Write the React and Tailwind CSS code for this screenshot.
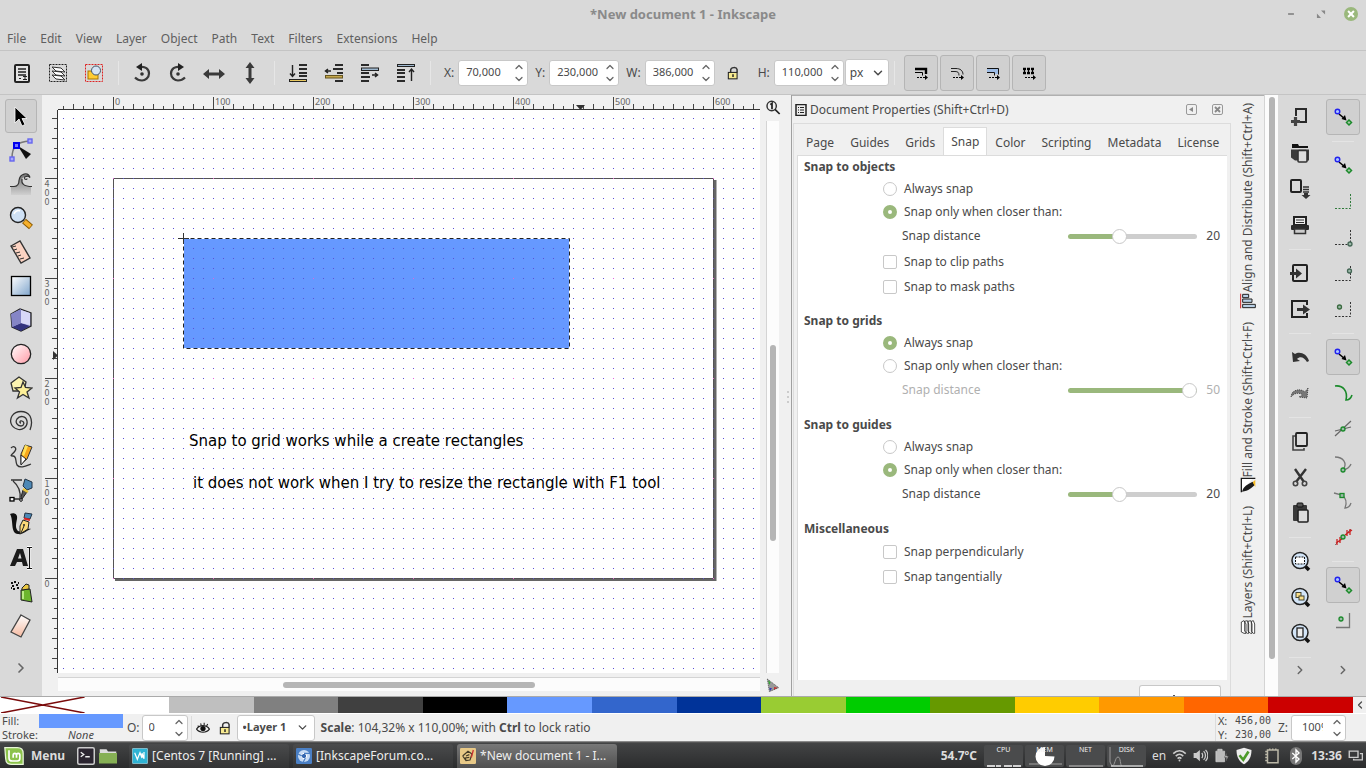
import { ChevronDown, ChevronLeft, ChevronRight, ChevronUp } from "lucide-react";

const menus = ["File", "Edit", "View", "Layer", "Object", "Path", "Text", "Filters", "Extensions", "Help"];

const swatches = [
  "#ffffff", "#bfbfbf", "#808080", "#404040", "#000000", "#6699ff", "#3366cc", "#003399",
  "#99cc33", "#00cc00", "#669900", "#ffcc00", "#ff9900", "#ff6600", "#cc0000",
];

const tabs = ["Page", "Guides", "Grids", "Snap", "Color", "Scripting", "Metadata", "License"];

function Svg({ size = 24, children, className = "" }) {
  return (
    <svg width={size} height={size} viewBox="0 0 24 24" fill="none" className={`shrink-0 ${className}`} aria-hidden="true">
      {children}
    </svg>
  );
}

/* ---------- selector toolbar icons ---------- */

const selectIcons = {
  "Select all": (
    <>
      <rect x="5" y="4" width="14" height="17" rx="1" fill="#e4e4e4" stroke="#222" strokeWidth="2" />
      <path d="M8 8h8M8 11h8M8 14h8" stroke="#222" strokeWidth="1.4" />
      <path d="M9 17.500h2M13 15.500h4M13 18.500h4M15 15.500v3" stroke="#222" />
    </>
  ),
  "Select all in all layers": (
    <>
      <rect x="3.5" y="3.5" width="17" height="17" stroke="#222" strokeDasharray="2 1" />
      <path d="M6 14l9 1 4 4-9-1zM6 10l9 1 4 4-9-1zM6 6l9 1 4 4-9-1z" fill="#fff" stroke="#333" />
    </>
  ),
  Deselect: (
    <>
      <rect x="3.5" y="3.5" width="17" height="17" stroke="#d22" strokeDasharray="2 1" />
      <rect x="6" y="10" width="10" height="8" fill="#fc3" stroke="#a70" />
      <circle cx="14" cy="9.5" r="4.5" fill="#d5e4f5" stroke="#456" />
    </>
  ),
};

const rotateIcons = {
  "Rotate left": (
    <>
      <path d="M10 6c5-1 9 2 9 6.500s-4 7-7 7c-3 0-5-1-7-3" stroke="#3a3a3a" strokeWidth="2.2" />
      <path d="M12 2v8L6 6z" fill="#222" />
      <circle cx="12" cy="13" r="1.8" fill="#333" />
    </>
  ),
  "Rotate right": (
    <>
      <path d="M14 6c-5-1-9 2-9 6.500s4 7 7 7c3 0 5-1 7-3" stroke="#3a3a3a" strokeWidth="2.2" />
      <path d="M12 2v8l6-4z" fill="#222" />
      <circle cx="12" cy="13" r="1.8" fill="#333" />
    </>
  ),
  "Flip horizontal": <path d="M1 13l6-5v3.500h10V8l6 5-6 5v-3.500H7V18z" fill="#3a3a3a" />,
  "Flip vertical": <path d="M12 1l4.500 6H13.500v10h3L12 23l-4.500-6h3V7h-3z" fill="#3a3a3a" />,
};

const raiseIcons = {
  "Lower to bottom": (
    <>
      <path d="M13 4h8M13 8h8M13 12h8M13 15h8" stroke="#2a2a2a" strokeWidth="2" />
      <path d="M6.500 4v11M4 12.500l2.500 3 2.500-3" stroke="#222" strokeWidth="1.400" />
      <rect x="3.500" y="18.500" width="17" height="2" fill="#e8c860" stroke="#222" />
    </>
  ),
  Lower: (
    <>
      <path d="M13 4h8M11 8h10M15 12h6M13 20h8" stroke="#2a2a2a" strokeWidth="2" />
      <rect x="3.500" y="14.500" width="17" height="2.500" fill="#c5a94f" stroke="#665520" />
      <path d="M9 10H4M6 8l-2.500 2L6 12" stroke="#222" strokeWidth="1.500" />
    </>
  ),
  Raise: (
    <>
      <path d="M3 4h8M3 12h8M3 16h9M3 20h8" stroke="#2a2a2a" strokeWidth="2" />
      <rect x="3.500" y="7" width="17" height="2.500" fill="#9fb9d0" stroke="#222" />
      <path d="M14 14h5M17 12l2.500 2-2.500 2" stroke="#222" strokeWidth="1.500" />
    </>
  ),
  "Raise to top": (
    <>
      <rect x="3.500" y="3.500" width="17" height="2" fill="#9fb9d0" stroke="#222" />
      <path d="M3 9h8M3 12h8M3 16h8M3 20h8" stroke="#2a2a2a" strokeWidth="2" />
      <path d="M17.500 20V8M15 11l2.500-3 2.500 3" stroke="#222" strokeWidth="1.400" />
    </>
  ),
};

const dashArrow = (
  <>
    <path d="M8 16.500h2M11 16.500h2M14 16.500h3" stroke="#000" />
    <path d="M16 14l3 2.500-3 2.500z" fill="#000" />
  </>
);

const affectIcons = {
  "Scale stroke width": (
    <>
      <path d="M6 8h11v5" stroke="#000" strokeWidth="2.400" />
      <path d="M6 11.500h7.500v3" stroke="#000" />
      {dashArrow}
    </>
  ),
  "Scale rounded corners": (
    <>
      <path d="M6 7.500h5c4 0 7 2 7 6M6 10.500h4c3 0 4 1 4 4" stroke="#222" />
      {dashArrow}
    </>
  ),
  "Move gradients": (
    <>
      <path d="M6 7h12v6h-4v-2H6z" fill="#9dbce6" />
      <path d="M6 7.500h11.500v6M6 11.500h7.500v3" stroke="#111" />
      {dashArrow}
    </>
  ),
  "Move patterns": (
    <>
      <path d="M6 8h12M6 12h12" stroke="#000" strokeWidth="2.400" strokeDasharray="3 1" />
      <path d="M7.500 7v6M11.500 7v6M15.500 7v6" stroke="#000" />
      {dashArrow}
    </>
  ),
};

/* ---------- toolbox icons ---------- */

const tools = {
  Selector: <path d="M6 3v16l4-4 3 7 3-1.500-3-6h5z" fill="#000" stroke="#fff" strokeWidth=".8" />,
  "Node editor": (
    <>
      <path d="M3 20C3 9 7 4 21 3" stroke="#777" strokeWidth="1.500" />
      <path d="M9 8l13 8-5 5z" fill="#111" />
      <rect x="5" y="5" width="5" height="5" fill="#77f" stroke="#00e" strokeWidth="2" />
      <rect x="19" y="1" width="4" height="4" fill="#aaf" stroke="#66e" strokeWidth="1.400" />
      <rect x="1" y="19" width="4" height="4" fill="#aaf" stroke="#66e" strokeWidth="1.400" />
    </>
  ),
  Tweak: (
    <>
      <path d="M2 15h3c4 0 5-3 5-6 1-7 9-9 11-3-1-1-2-2-4-1-4 0-5 3-4 6s4 4 9 4v8H2z" fill="url(#tweakFill)" />
      <path d="M1 14.500h4c4 0 5-3 5-6 1-7 9-9 11-3-1-1-2-2-4-1-2 0-2 3 0 3 1 0 1-1 1-1M13 7c-1 5 2 7.500 10 7.500" stroke="#333" strokeWidth="1.200" />
    </>
  ),
  Zoom: (
    <>
      <path d="M15 15l7 6" stroke="#8a5a00" strokeWidth="6" />
      <path d="M15.500 15.500l6 5" stroke="#f7b02c" strokeWidth="4" />
      <circle cx="9" cy="9" r="7.500" fill="#cfe1f5" stroke="#222" strokeWidth="1.400" />
      <path d="M5 8c1-3 4-4 6-3" stroke="#fff" strokeWidth="1.500" />
    </>
  ),
  Measure: (
    <>
      <path d="M2 6l9-5 10 17-9 5z" fill="#fbd3c2" stroke="#333" strokeWidth="1.400" />
      <path d="M3 7l4-1M5 10l3-1M7 13l4-1M9 16l3-1M11 19l4-1" stroke="#333" />
    </>
  ),
  Rectangle: <rect x="2.500" y="2.500" width="19" height="19" fill="url(#rectFill)" stroke="#000" strokeWidth="1.300" />,
  "3D box": (
    <>
      <path d="M2 6l9-5 11 4v13l-10 5-9-4z" fill="#b5b5e5" stroke="#222" strokeWidth="1.300" />
      <path d="M12 15l9 3-9 5-9-4z" fill="#33337f" />
      <path d="M12 1v14l-9 4-1-13z" fill="#8585c6" />
      <path d="M12 2l9 3v12l-9-2z" fill="#d8d8f8" />
    </>
  ),
  Ellipse: <circle cx="12" cy="12" r="9.700" fill="url(#circleFill)" stroke="#222" strokeWidth="1.300" />,
  Star: (
    <>
      <path d="M2 7l8-6 7 5-2 9H4z" fill="#fbf3b0" stroke="#333" strokeWidth="1.300" />
      <path d="M14 6l2.500 5.500 6.500.5-5 4 2 6-6-3.500L8.500 22l2-6L6 12l6-.5z" fill="#fdf098" stroke="#333" strokeWidth="1.300" />
    </>
  ),
  Spiral: (
    <path
      d="M12 13c-2 0-1-3 1-2 3 1 2 5-1 5-4 0-6-4-4-7 3-4 9-3 10 2 1 6-5 10-10 8C2 17 0 11 3 6 7 0 17 0 21 6c2 4 2 9 0 14"
      stroke="#333"
      strokeWidth="1.300"
    />
  ),
  Pencil: (
    <>
      <path d="M2 4c3-3 6 0 4 3-3 4-6 5-2 5 4 0 2 5 4 9 3 4 9 1 14-1" stroke="#333" strokeWidth="1.300" />
      <path d="M16 1l7 2-5 12-6 5 0-10z" fill="#f8a71c" stroke="#333" />
      <path d="M16 1l3 1-4 10-2-1z" fill="#ffe25a" />
      <path d="M12 11l5 4-5 6z" fill="#fff" stroke="#222" />
    </>
  ),
  Bezier: (
    <>
      <path d="M2 2h11M4 3c6 5 8 10 7 18H3" stroke="#333" strokeWidth="1.300" />
      <path d="M16 1l7 3v6l-5 2-4-4z" fill="#4d88b5" stroke="#234" />
      <path d="M14 12l4 2-5 7-1-2z" fill="#555" stroke="#222" />
      <path d="M14 11l5 3" stroke="#e8c640" strokeWidth="2.500" />
      <rect x="1" y="19.500" width="4" height="3.500" fill="#fff" stroke="#000" strokeWidth="1.300" />
      <circle cx="12" cy="22" r="1.300" fill="#fff" stroke="#000" />
    </>
  ),
  Calligraphy: (
    <>
      <path d="M1 2c4-2 8 0 7 5s-2 9 1 12c3 2 8-3 13-2-4 1-8 6-13 5C1 21 5 9 1 2z" fill="#111" />
      <path d="M16 1l7 1-2 5-6-1z" fill="#4d88b5" stroke="#234" />
      <path d="M15 6.500l6 1.500" stroke="#d22" strokeWidth="2" />
      <path d="M14 8l6 2-1 7-8 5 0-8z" fill="#fbd877" stroke="#222" />
      <path d="M12 21l3-7" stroke="#222" />
      <circle cx="15" cy="13" r="1" fill="#222" />
    </>
  ),
  Text: (
    <>
      <path d="M1 20L8 3h6l5 17h-5l-1-4H8l-2 4zM9 12.500h3.500L11 7z" fill="#1b1b1b" fillRule="evenodd" />
      <path d="M18 1.500h5M18 22.500h5M20.500 2v20" stroke="#fff" strokeWidth="3" />
      <path d="M18 1.500h5M18 22.500h5M20.500 2v20" stroke="#111" strokeWidth="1.200" />
    </>
  ),
  Spray: (
    <>
      <path d="M2 3h2M5 2h2M3 6h2M7 5h2M8 8h2M4 9h2M9 3h1M2 8h1" stroke="#111" strokeWidth="1.800" />
      <path d="M12 10l9-1 2 13-11-2z" fill="#6cb52d" stroke="#222" />
      <path d="M14 11v8" stroke="#b9ea84" strokeWidth="2" />
      <path d="M13 8l4-4 3 1v4l-7 1z" fill="#e8c640" stroke="#222" />
    </>
  ),
  Eraser: <path d="M12 1l9 5-9 17-10-5z" fill="url(#eraserFill)" stroke="#444" strokeWidth="1.300" />,
};

/* ---------- command bar icons ---------- */

const magnifier = (
  <>
    <path d="M17 17l4 4" stroke="#111" strokeWidth="3.500" />
    <circle cx="12" cy="11.500" r="8" fill="#d3e5f8" stroke="#222" strokeWidth="1.500" />
  </>
);

const commandGroups = [
  {
    New: (
      <>
        <path d="M8 11V4h10v13h-6" stroke="#2a2a2a" strokeWidth="2" />
        <path d="M3 16.500h9M7.500 12v9" stroke="#444" strokeWidth="3.200" />
      </>
    ),
    Open: (
      <>
        <path d="M4 3h6l1 2h9v2H4z" fill="#111" />
        <path d="M3 8.500h18v11H7l-4-3z" fill="#3a3a3a" />
        <rect x="10" y="9.500" width="9" height="11.500" rx="1" fill="#ddd" stroke="#333" strokeWidth="1.600" />
      </>
    ),
    Save: (
      <>
        <rect x="3" y="3" width="10" height="12" rx="1" stroke="#222" strokeWidth="2" />
        <path d="M15 10h6M15 12.500h6M15 15h6" stroke="#333" strokeWidth="1.300" />
        <path d="M16 16h4v2h2.500L18 22l-4.500-4H16z" fill="#333" />
      </>
    ),
    Print: (
      <>
        <rect x="6" y="4" width="12" height="8" fill="#eee" stroke="#222" strokeWidth="2" />
        <path d="M8 7h8M8 9.500h8" stroke="#333" />
        <rect x="3" y="12" width="18" height="5" rx="1" fill="#2a2a2a" />
        <rect x="6.500" y="16" width="11" height="4.500" fill="#ccc" stroke="#333" strokeWidth="1.500" />
      </>
    ),
  },
  {
    Import: (
      <>
        <rect x="5" y="4" width="14" height="16" rx="1" stroke="#222" strokeWidth="2" />
        <path d="M2 11h6V7.500l6 5-6 5V14H2z" fill="#333" />
      </>
    ),
    Export: (
      <>
        <path d="M19 8V4H4v16h15v-4" stroke="#222" strokeWidth="2" />
        <path d="M9 11h6V7.500l7 5-7 5V14H9z" fill="#333" />
      </>
    ),
  },
  {
    Undo: <path d="M4 7l1 10 7-1-3-2c3-3 7-2 10 3l2-1C19 8 11 6 7 9z" fill="#333" />,
    Redo: <path d="M20 7l-1 10-8-1 4-2c-4-3-9-2-12 2l1-4c4-4 9-4 13-1z" fill="#777" stroke="#444" strokeDasharray="1 1" />,
  },
  {
    Copy: (
      <>
        <path d="M8 7H5v14h11v-2" stroke="#444" strokeWidth="1.600" />
        <rect x="8" y="4" width="11" height="13" rx="1" fill="#ddd" stroke="#222" strokeWidth="1.800" />
      </>
    ),
    Cut: (
      <>
        <path d="M7 4l9 13M18 4L8 17" stroke="#333" strokeWidth="2.400" />
        <circle cx="7.500" cy="18.500" r="2.200" stroke="#444" strokeWidth="1.600" />
        <circle cx="16.500" cy="18.500" r="2.200" stroke="#444" strokeWidth="1.600" />
      </>
    ),
    Paste: (
      <>
        <rect x="5" y="4" width="14" height="16" rx="1" fill="#3a3a3a" />
        <rect x="9" y="2" width="6" height="4" rx="1" fill="#555" stroke="#111" />
        <rect x="10" y="9" width="10" height="12" rx="1" fill="#ddd" stroke="#222" strokeWidth="1.600" />
      </>
    ),
  },
  {
    "Zoom selection": (
      <>
        {magnifier}
        <rect x="7.500" y="8" width="9" height="7" fill="#fff" stroke="#111" strokeDasharray="2 1" />
      </>
    ),
    "Zoom drawing": (
      <>
        {magnifier}
        <rect x="8" y="7.500" width="5" height="5" fill="#fbe08a" stroke="#443" />
        <rect x="11" y="11" width="5" height="4" fill="#fbe08a" stroke="#443" />
      </>
    ),
    "Zoom page": (
      <>
        {magnifier}
        <rect x="9" y="7" width="6" height="9" fill="#eee" stroke="#222" strokeWidth="1.300" />
      </>
    ),
  },
];

/* ---------- snap bar icons ---------- */

const snapArrow = (
  <>
    <path d="M8 9l6 5" stroke="#000" strokeWidth="1.600" />
    <path d="M15.500 15.500l-5-1.500 3.500-4z" fill="#000" />
    <circle cx="6.500" cy="6.500" r="2.300" fill="#aac4ff" stroke="#22e" strokeWidth="1.400" />
    <path d="M18 15l2.500 2.500-2.500 2.500-2.500-2.500z" fill="#a9c7a9" stroke="#1a8a2a" strokeWidth="1.500" />
  </>
);
const corner = <path d="M4 19.500h15.500V5" stroke="#333" strokeDasharray="2 1.500" />;
const smallNode = (cx, cy, color = "#1a8a2a") => (
  <circle cx={cx} cy={cy} r="2" fill="#9bb8a8" stroke={color} strokeWidth="1.300" />
);

const snapGroups = [
  [{ name: "Enable snapping", on: true, art: snapArrow }],
  [
    { name: "Snap bounding boxes", art: snapArrow },
    { name: "Snap to edges", art: <path d="M4 19.500h15.500V5" stroke="#2f7a3a" strokeDasharray="2 1.500" /> },
    { name: "Snap to corners", art: <>{corner}{smallNode(19, 19, "#465")}</> },
    { name: "Snap to edge midpoints", art: <>{corner}{smallNode(18.500, 10, "#465")}</> },
    { name: "Snap to box centers", art: <>{corner}{smallNode(8.500, 10, "#3a6a3f")}</> },
  ],
  [
    { name: "Snap nodes", on: true, art: snapArrow },
    { name: "Snap to paths", art: <path d="M4 5c8-1 13 5 11 14 3 0 5-2 6-5" stroke="#1a8a2a" strokeWidth="1.600" /> },
    { name: "Snap to intersections", art: <><path d="M4 19L20 4M4 14l16-4" stroke="#666" strokeWidth="1.200" />{smallNode(12, 12)}</> },
    { name: "Snap to cusp nodes", art: <><path d="M4 4c8 0 13 6 8 13 4-1 7-3 8-6" stroke="#777" strokeWidth="1.300" />{smallNode(12, 17)}</> },
    { name: "Snap to smooth nodes", art: <><path d="M3 4l8 2c4 3 5 8 3 13 3 0 5-2 6-5" stroke="#777" strokeWidth="1.300" /><rect x="9" y="4.500" width="4" height="4" fill="#9bb8a8" stroke="#1a8a2a" strokeWidth="1.300" /></> },
    { name: "Snap to line midpoints", art: <><path d="M4 20L20 4" stroke="#777" /><path d="M6 14v6M9 12v6M5 18l6-4M16 5v6M19 4v6M14 10l7-5" stroke="#c22" strokeWidth="1.300" />{smallNode(12, 12)}</> },
  ],
  [
    { name: "Snap others", on: true, art: snapArrow },
    { name: "Snap object centers", art: <><path d="M5 18.500h13.500V4" stroke="#777" strokeWidth="1.300" />{smallNode(10, 10)}</> },
  ],
];

function Gradients() {
  return (
    <svg width="0" height="0" className="absolute" aria-hidden="true">
      <defs>
        <linearGradient id="rectFill" x1="0" y1="0" x2="1" y2="1">
          <stop offset="0" stopColor="#fff" />
          <stop offset="1" stopColor="#7fa5cc" />
        </linearGradient>
        <linearGradient id="circleFill" x1="0" y1="0" x2="1" y2="1">
          <stop offset="0" stopColor="#fff" />
          <stop offset="1" stopColor="#ff9aa6" />
        </linearGradient>
        <linearGradient id="eraserFill" x1="0" y1="0" x2="0" y2="1">
          <stop offset="0" stopColor="#fff" />
          <stop offset="1" stopColor="#f5b9a0" />
        </linearGradient>
        <linearGradient id="tweakFill" x1="0" y1="0" x2="0" y2="1">
          <stop offset="0" stopColor="#777" />
          <stop offset="1" stopColor="#d0d0d0" />
        </linearGradient>
      </defs>
    </svg>
  );
}

function TitleBar() {
  return (
    <header className="grid h-7 grid-cols-[1fr_auto_1fr] items-center">
      <h1 className="col-start-2 pt-0.5 text-[13px] font-bold text-[#8a8a8a]">*New document 1 - Inkscape</h1>
      <div className="flex items-center justify-end gap-4 pr-2">
        <button type="button" aria-label="Minimize">
          <Svg size={14}><path d="M7 12h10" stroke="#888" strokeWidth="3" /></Svg>
        </button>
        <button type="button" aria-label="Maximize">
          <Svg size={14}><path d="M12 6h7v7zM5 11v8h7z" fill="#888" /></Svg>
        </button>
        <button type="button" aria-label="Close window">
          <Svg size={14}>
            <circle cx="12" cy="12" r="12" fill="#9ab87c" />
            <path d="M7 7l10 10M17 7L7 17" stroke="#fff" strokeWidth="3.500" />
          </Svg>
        </button>
      </div>
    </header>
  );
}

function ToolbarSeparator() {
  return (
    <span className="flex h-6 w-3 shrink-0 justify-center">
      <span className="w-px bg-[#e6e6e6]" />
    </span>
  );
}

function IconGroup({ icons }) {
  return Object.entries(icons).map(([name, art]) => (
    <button key={name} type="button" aria-label={name} className="flex h-9 w-9 shrink-0 items-center justify-center">
      <Svg>{art}</Svg>
    </button>
  ));
}

function Steppers() {
  return (
    <span className="flex flex-col text-[#666]">
      <ChevronUp size={12} strokeWidth={2.500} />
      <ChevronDown size={12} strokeWidth={2.500} />
    </span>
  );
}

function SpinField({ label, value }) {
  return (
    <label className="flex items-center gap-1">
      <span>{label}:</span>
      <span className="flex h-[26px] w-[70px] items-center rounded-[3px] border border-[#c8c8c8] bg-white pr-0.5 pl-[7px]">
        <input type="text" defaultValue={value} className="w-11 min-w-0 flex-1 bg-transparent text-[11px] outline-none" />
        <Steppers />
      </span>
    </label>
  );
}

function Padlock() {
  return (
    <Svg size={14}>
      <path d="M8 11V7c0-5 10-6 11-1v5" stroke="#333" strokeWidth="2.500" />
      <rect x="4" y="11" width="15" height="11" fill="#f7ea90" stroke="#222" strokeWidth="1.800" />
      <path d="M12 14v5" stroke="#222" strokeWidth="2.500" />
    </Svg>
  );
}

function SelectorToolbar() {
  return (
    <div className="flex h-[45px] items-center border-y border-[#c4c4c4] pl-1">
      <IconGroup icons={selectIcons} />
      <ToolbarSeparator />
      <IconGroup icons={rotateIcons} />
      <ToolbarSeparator />
      <IconGroup icons={raiseIcons} />
      <ToolbarSeparator />
      <div className="flex items-center gap-[7px] pl-2">
        <SpinField label="X" value="70,000" />
        <SpinField label="Y" value="230,000" />
        <SpinField label="W" value="386,000" />
        <button type="button" aria-label="Lock width and height" className="w-[29px] pl-1">
          <Padlock />
        </button>
        <SpinField label="H" value="110,000" />
      </div>
      <span className="relative ml-px flex items-center">
        <select aria-label="Units" defaultValue="px" className="h-[27px] w-11 appearance-none rounded-[3px] border border-[#c8c8c8] bg-white pl-1">
          <option>px</option>
          <option>mm</option>
        </select>
        <ChevronDown size={14} strokeWidth={2.500} className="pointer-events-none absolute right-1" />
      </span>
      <ToolbarSeparator />
      <div className="flex gap-0.5 pl-[3px]">
        {Object.entries(affectIcons).map(([name, art]) => (
          <button
            key={name}
            type="button"
            aria-label={name}
            aria-pressed="true"
            className="flex h-9 w-[34px] items-center justify-center rounded-[3px] border border-[#b5b5b5] bg-[#d0d0d0]"
          >
            <Svg>{art}</Svg>
          </button>
        ))}
      </div>
    </div>
  );
}

function Toolbox() {
  return (
    <nav aria-label="Tools" className="flex w-[42px] shrink-0 flex-col items-center pt-1">
      {Object.entries(tools).map(([name, art]) => (
        <button
          key={name}
          type="button"
          aria-label={name}
          className={`flex h-[34px] w-8 items-center justify-center rounded-[3px] border ${
            name === "Selector" ? "border-[#b5b5b5] bg-[#d0d0d0]" : "border-transparent"
          }`}
        >
          <Svg>{art}</Svg>
        </button>
      ))}
      <button type="button" aria-label="More tools" className="mt-[17px] text-[#666]">
        <ChevronRight size={16} strokeWidth={2.500} />
      </button>
    </nav>
  );
}

/* ---------- rulers and canvas ---------- */

const GRID = 10;
const ORIGIN_X = 55;
const TOP_Y = 68;

function tickLength(step) {
  if (step % 10 === 0) return 12;
  return step % 2 === 0 ? 5 : 3;
}

function HorizontalRuler() {
  const steps = Array.from({ length: 70 }, (_, i) => i - 5);
  return (
    <svg className="ml-4 block h-[15px] w-[702px] max-w-full" aria-hidden="true">
      {steps.map((s) => (
        <rect key={s} x={ORIGIN_X + s * GRID} y={14 - tickLength(s)} width="1" height={tickLength(s)} fill="#444" />
      ))}
      {[0, 100, 200, 300, 400, 500, 600].map((n) => (
        <text key={n} x={ORIGIN_X + n + 2} y="10" fontSize="9" fill="#666">{n}</text>
      ))}
      <path d="M518 10h9l-4.500 5z" fill="#333" />
      <rect x="0" y="14" width="100%" height="1" fill="#333" />
    </svg>
  );
}

function VerticalRuler() {
  const steps = Array.from({ length: 56 }, (_, i) => i - 6);
  return (
    <svg className="block w-4 shrink-0" aria-hidden="true">
      {steps.map((s) => (
        <rect key={s} x={15 - tickLength(s)} y={TOP_Y + s * GRID} width={tickLength(s)} height="1" fill="#444" />
      ))}
      {["400", "300", "200", "100", "0"].map((n, i) => (
        <text
          key={n}
          x="5"
          y={TOP_Y + i * 100 + 1}
          fontSize="9"
          fill="#666"
          className="font-['Noto_Sans_CJK_SC',sans-serif] [text-orientation:upright] [writing-mode:vertical-rl]"
        >
          {n}
        </text>
      ))}
      <path d="M11 241v9l5-4.500z" fill="#333" />
      <rect x="15" y="0" width="1" height="100%" fill="#333" />
    </svg>
  );
}

function Canvas() {
  return (
    <svg className="block h-auto min-w-0 flex-1 bg-white" role="img" aria-label="Drawing">
      <defs>
        <pattern id="minorGrid" width="10" height="10" x="5" y="8" patternUnits="userSpaceOnUse">
          <rect width="1" height="1" fill="#5a4fd8" />
        </pattern>
        <pattern id="majorGrid" width="100" height="100" x="55" y="68" patternUnits="userSpaceOnUse">
          <rect width="1" height="1" fill="#e060e0" />
        </pattern>
      </defs>
      <path d="M57 469.500h601M657 70v401" stroke="#666" strokeWidth="3" />
      <rect x="55.500" y="68.500" width="600" height="400" fill="#fff" stroke="#555" />
      <rect x="125" y="128" width="386" height="110" fill="#6699ff" />
      <rect width="100%" height="100%" fill="url(#minorGrid)" />
      <rect width="100%" height="100%" fill="url(#majorGrid)" />
      <rect x="125.500" y="128.500" width="386" height="110" stroke="#fff" fill="none" />
      <rect x="125.500" y="128.500" width="386" height="110" stroke="#222" strokeDasharray="4 3" fill="none" />
      <path d="M120 128.500h11M125.500 123v11" stroke="#333" />
      <text x="131" y="336" fontSize="15" fill="#000" className="font-['DejaVu_Sans',sans-serif]">Snap to grid works while a create rectangles</text>
      <text x="135" y="378" fontSize="15" fill="#000" className="font-['DejaVu_Sans',sans-serif]">it does not work when I try to resize the rectangle with F1 tool</text>
    </svg>
  );
}

function Workspace() {
  return (
    <section className="flex min-w-0 flex-1 bg-[#f0f0f0]">
      <div className="flex min-w-0 flex-1 flex-col">
        <HorizontalRuler />
        <div className="flex flex-1">
          <VerticalRuler />
          <Canvas />
        </div>
        <div className="mt-1 mb-[5px] ml-4 flex h-[14px] items-center border-t border-[#d4d4d4] bg-[#fcfcfc]">
          <span className="ml-[32%] h-1.5 w-[36%] rounded-full bg-[#b5b5b5]" />
        </div>
      </div>
      <div className="flex w-[31px] shrink-0 flex-col">
        <button type="button" aria-label="Zoom with window" className="flex h-[26px] items-center pl-[5px]">
          <Svg size={16}>
            <circle cx="10" cy="9" r="7" stroke="#333" strokeWidth="2.200" />
            <path d="M8 7l2.500-2v9M15 14l7 7" stroke="#222" strokeWidth="2.600" />
          </Svg>
        </button>
        <div className="flex flex-1 items-center">
          <span className="ml-1.5 flex w-[13px] flex-col items-center self-stretch border-l border-[#d4d4d4] bg-[#fcfcfc]">
            <span className="grow-[224]" />
            <span className="w-1.5 grow-[196] rounded-full bg-[#b5b5b5]" />
            <span className="grow-[132]" />
          </span>
          <span className="ml-2 flex flex-col gap-[3px]">
            <span className="size-0.5 bg-[#ccc]" />
            <span className="size-0.5 bg-[#ccc]" />
            <span className="size-0.5 bg-[#ccc]" />
          </span>
        </div>
        <button type="button" aria-label="Color managed view" className="flex h-[23px] items-center pl-1">
          <Svg size={16}>
            <path d="M5 3l17 13-14 6z" fill="#999" />
            <path d="M6 5l4 3-2 4z" fill="#3a3" />
            <path d="M15 15l6 1-6 3z" fill="#c33" />
            <path d="M8 16l4 1-3 4z" fill="#33b" />
            <path d="M5 3l17 13-14 6z" stroke="#444" strokeDasharray="2 1" />
          </Svg>
        </button>
      </div>
    </section>
  );
}

/* ---------- document properties dialog ---------- */

function RadioRow({ group, label, checked }) {
  return (
    <label className="ml-[85px] flex h-[23px] items-center gap-[7px]">
      <input
        type="radio"
        name={group}
        defaultChecked={checked}
        className="size-[14px] appearance-none rounded-full border border-[#c8c8c8] bg-white checked:border-[5px] checked:border-[#9ab87c]"
      />
      {label}
    </label>
  );
}

function CheckRow({ label }) {
  return (
    <label className="ml-[85px] flex h-[25px] items-center gap-[7px]">
      <input type="checkbox" className="size-[14px] appearance-none rounded-[2px] border border-[#c8c8c8] bg-white checked:bg-[#9ab87c]" />
      {label}
    </label>
  );
}

function DistanceRow({ id, value, disabled }) {
  const filled = ((value - 1) / 49) * 100;
  return (
    <div className={`ml-[104px] flex h-[26px] items-center pr-[7px] ${disabled ? "text-[#b0b0b0]" : ""}`}>
      <label htmlFor={id} className="flex-1">Snap distance</label>
      <input
        id={id}
        type="range"
        min="1"
        max="50"
        defaultValue={value}
        disabled={disabled}
        className="h-[5px] w-[129px] appearance-none rounded-full [&::-webkit-slider-thumb]:size-[15px] [&::-webkit-slider-thumb]:appearance-none [&::-webkit-slider-thumb]:rounded-full [&::-webkit-slider-thumb]:border [&::-webkit-slider-thumb]:border-[#c8c8c8] [&::-webkit-slider-thumb]:bg-white"
        style={{ background: `linear-gradient(to right, #9ab87c ${filled}%, #cecece ${filled}%)` }}
      />
      <output htmlFor={id} className="w-[23px] text-right">{value}</output>
    </div>
  );
}

function SnapSection({ title, children }) {
  return (
    <fieldset>
      <legend className="h-[21px] pl-1.5 leading-[22px] font-bold">{title}</legend>
      {children}
    </fieldset>
  );
}

function SnapPage() {
  return (
    <div className="flex flex-1 flex-col gap-[11px] border-t border-l border-[#dcdcdc] bg-white">
      <SnapSection title="Snap to objects">
        <RadioRow group="objects" label="Always snap" />
        <RadioRow group="objects" label="Snap only when closer than:" checked />
        <DistanceRow id="objects-distance" value={20} />
        <CheckRow label="Snap to clip paths" />
        <CheckRow label="Snap to mask paths" />
      </SnapSection>
      <SnapSection title="Snap to grids">
        <RadioRow group="grids" label="Always snap" checked />
        <RadioRow group="grids" label="Snap only when closer than:" />
        <DistanceRow id="grids-distance" value={50} disabled />
      </SnapSection>
      <SnapSection title="Snap to guides">
        <RadioRow group="guides" label="Always snap" />
        <RadioRow group="guides" label="Snap only when closer than:" checked />
        <DistanceRow id="guides-distance" value={20} />
      </SnapSection>
      <SnapSection title="Miscellaneous">
        <CheckRow label="Snap perpendicularly" />
        <CheckRow label="Snap tangentially" />
      </SnapSection>
    </div>
  );
}

function PanelButton({ label, children }) {
  return (
    <button type="button" aria-label={label} className="flex size-[11px] items-center justify-center rounded-[2px] border border-[#999] text-[#888]">
      <svg width="7" height="7" viewBox="0 0 7 7" aria-hidden="true">{children}</svg>
    </button>
  );
}

function DocumentProperties() {
  return (
    <section className="flex w-[440px] shrink-0 flex-col border-l border-[#a0a0a0] bg-[#f0f0f0]">
      <div className="flex h-7 items-center gap-[3px] border-t border-[#b0b0b0] pr-2 pl-[3px]">
        <Svg size={12}>
          <rect x="2" y="1" width="20" height="22" fill="#eee" stroke="#222" strokeWidth="3" />
          <path d="M6 7h2M10 7h8M6 12h2M10 12h8M6 17h2M10 17h8" stroke="#222" strokeWidth="2" />
        </Svg>
        <h2 className="flex-1">Document Properties (Shift+Ctrl+D)</h2>
        <div className="flex gap-[15px]">
          <PanelButton label="Iconify dialog"><path d="M5 1v5L1 3.500z" fill="currentColor" /></PanelButton>
          <PanelButton label="Close dialog"><path d="M1 1l5 5M6 1L1 6" stroke="currentColor" strokeWidth="1.800" /></PanelButton>
        </div>
      </div>
      <div className="ml-px flex flex-1 flex-col border-t border-r border-l border-[#dcdcdc] pr-[3px] pl-[3px]">
        <div role="tablist" className="flex pt-[3px] pl-px">
          {tabs.map((tab) => (
            <button
              key={tab}
              type="button"
              role="tab"
              aria-selected={tab === "Snap"}
              className={`h-7 border-x border-t px-[7px] whitespace-nowrap ${
                tab === "Snap" ? "-mb-px border-[#dcdcdc] bg-white" : "border-transparent pt-0.5"
              }`}
            >
              {tab}
            </button>
          ))}
        </div>
        <SnapPage />
        <div className="flex h-4 items-end justify-end overflow-hidden pr-1.5">
          <button type="button" aria-label="Close" className="flex h-[11px] w-[82px] items-end justify-center rounded-t-[3px] border border-b-0 border-[#c8c8c8] bg-white">
            <span className="mr-3 h-px w-0.5 bg-[#555]" />
          </button>
        </div>
      </div>
    </section>
  );
}

function DockTabs() {
  const items = [
    {
      label: "Align and Distribute (Shift+Ctrl+A)",
      art: (
        <>
          <path d="M1 1v22" stroke="#c22" strokeWidth="1.500" />
          <path d="M4 17h19v5H4zM4 9h14v5H4zM4 2h9v5H4z" fill="#b9d0e6" stroke="#222" strokeWidth="1.500" />
        </>
      ),
    },
    {
      label: "Fill and Stroke (Shift+Ctrl+F)",
      art: (
        <>
          <path d="M1 1h19L1 22z" fill="#fff" />
          <path d="M1 1h22v2H3v20H1zM3 22c2-8 8-11 16-15l3 5c-4 4-9 9-19 10z" fill="#1b1b1b" />
          <path d="M19 8l4-4v11z" fill="#f5b921" />
        </>
      ),
    },
    {
      label: "Layers (Shift+Ctrl+L)",
      art: <path d="M2 6v15l4 2h3V9L6 4zM7 5v15l4 3h2V9L11 4zM12 5v15l4 3h2V9L16 4zM17 5v15l3 3h2V9L20 4z" fill="#fff" stroke="#222" strokeWidth="1.200" />,
    },
  ];
  return (
    <div className="flex w-[33px] shrink-0 flex-col items-center gap-[13px] border-t border-[#b0b0b0] bg-[#f0f0f0] pt-[7px]">
      {items.map((item) => (
        <button key={item.label} type="button" className="flex flex-col items-center">
          <span className="rotate-180 whitespace-nowrap [writing-mode:vertical-rl]">{item.label}</span>
          <Svg size={16}>{item.art}</Svg>
        </button>
      ))}
    </div>
  );
}

function BarSeparator() {
  return (
    <span className="flex h-3 items-center">
      <span className="h-px w-[22px] bg-[#e4e4e4]" />
    </span>
  );
}

function CommandBar() {
  return (
    <nav aria-label="Commands" className="flex w-11 flex-col items-center pt-1">
      {commandGroups.map((group, i) => (
        <div key={i} className="flex flex-col items-center">
          {i > 0 && <BarSeparator />}
          <IconGroup icons={group} />
        </div>
      ))}
      <BarSeparator />
      <ChevronRight size={14} strokeWidth={2.500} className="text-[#666]" />
    </nav>
  );
}

function SnapBar() {
  return (
    <nav aria-label="Snapping" className="flex w-[42px] flex-col items-center pt-1">
      {snapGroups.map((group, i) => (
        <div key={i} className="flex flex-col items-center">
          {i > 0 && <BarSeparator />}
          {group.map((item) => (
            <button
              key={item.name}
              type="button"
              aria-label={item.name}
              aria-pressed={Boolean(item.on)}
              className={`flex h-9 w-[34px] items-center justify-center rounded-[3px] border ${
                item.on ? "border-[#b5b5b5] bg-[#d0d0d0]" : "border-transparent"
              }`}
            >
              <Svg>{item.art}</Svg>
            </button>
          ))}
        </div>
      ))}
      <ChevronRight size={14} strokeWidth={2.500} className="mt-6 text-[#666]" />
    </nav>
  );
}

function Palette() {
  return (
    <div className="flex h-[18px] border-t border-b border-t-[#aaa] border-b-white">
      <button type="button" aria-label="None" className="flex-1 bg-white">
        <svg className="block h-full w-full" viewBox="0 0 84 16" preserveAspectRatio="none" aria-hidden="true">
          <path d="M1 0l83 16M84 0L1 16" stroke="#7a0a0a" strokeWidth="1.500" />
        </svg>
      </button>
      {swatches.map((color) => (
        <button key={color} type="button" aria-label={color} className="flex-1" style={{ backgroundColor: color }} />
      ))}
      <button type="button" aria-label="Palette menu" className="flex w-[13px] items-center justify-center bg-[#f0f0f0]">
        <ChevronLeft size={12} strokeWidth={2.500} />
      </button>
    </div>
  );
}

function StatusBar() {
  return (
    <div className="flex h-7 items-center border-b border-[#8a8a8a] bg-[#f0f0f0]">
      <dl className="grid w-[123px] grid-cols-[37px_84px] gap-x-0 self-stretch pl-0.5 text-[11px] leading-[14px]">
        <dt>Fill:</dt>
        <dd className="h-[14px] bg-[#6699ff]" />
        <dt>Stroke:</dt>
        <dd className="text-center italic">None</dd>
      </dl>
      <label className="ml-1 flex items-center gap-0.5">
        O:
        <span className="flex h-[26px] w-[46px] items-center rounded-[3px] border border-[#c8c8c8] bg-white pr-0.5 pl-1.5">
          <input type="text" defaultValue="0" className="w-5 min-w-0 flex-1 bg-transparent text-[11px] outline-none" />
          <Steppers />
        </span>
      </label>
      <span className="ml-[3px] h-6 w-px bg-[#dcdcdc]" />
      <button type="button" aria-label="Toggle layer visibility" className="ml-1">
        <Svg size={14}>
          <path d="M1 14c5-8 17-8 22 0-5 7-17 7-22 0z" fill="#eee" stroke="#222" strokeWidth="2" />
          <circle cx="12" cy="13" r="4.500" fill="#111" />
          <path d="M3 8l2 2M8 4l1 4M14 3v4M20 5l-2 4" stroke="#222" strokeWidth="1.800" />
        </Svg>
      </button>
      <button type="button" aria-label="Lock layer" className="ml-2">
        <Padlock />
      </button>
      <span className="relative ml-[5px] flex items-center">
        <select aria-label="Current layer" className="h-[26px] w-[78px] appearance-none rounded-[3px] border border-[#c8c8c8] bg-white pl-[5px] text-[11px] font-bold">
          <option>•Layer 1</option>
        </select>
        <ChevronDown size={13} strokeWidth={2.500} className="pointer-events-none absolute right-1.5" />
      </span>
      <p className="ml-1.5 flex-1 whitespace-nowrap">
        <b>Scale</b>: 104,32% x 110,00%; with <b>Ctrl</b> to lock ratio
      </p>
      <dl className="grid grid-cols-[17px_37px] self-stretch border-l border-[#dcdcdc] pl-0.5 text-[11px] leading-[14px]">
        <dt>X:</dt>
        <dd className="font-['DejaVu_Sans_Mono',monospace] text-[10px] leading-[14px]">456,00</dd>
        <dt>Y:</dt>
        <dd className="font-['DejaVu_Sans_Mono',monospace] text-[10px] leading-[14px]">230,00</dd>
      </dl>
      <label className="ml-1.5 flex items-center gap-[3px] pr-5">
        Z:
        <span className="flex h-[26px] w-[55px] items-center rounded-[3px] border border-[#c8c8c8] bg-white pr-0.5 pl-2.5">
          <input type="text" defaultValue="100%" className="mr-2 w-5 min-w-0 flex-1 bg-transparent text-[11px] outline-none" />
          <Steppers />
        </span>
      </label>
    </div>
  );
}

/* ---------- desktop panel ---------- */

function TaskButton({ label, active, children }) {
  return (
    <button
      type="button"
      className={`flex h-6 w-40 items-center gap-1 rounded-t-[3px] px-[3px] whitespace-nowrap text-[#eee] ${
        active ? "bg-linear-to-b from-[#787878] to-[#505050]" : "bg-linear-to-b from-[#4a4b4c] to-[#333435]"
      }`}
    >
      <Svg size={16}>{children}</Svg>
      {label}
    </button>
  );
}

function Meter({ label, children }) {
  return (
    <div className="relative flex h-[22px] w-[39px] justify-center rounded-[2px] bg-[#4a4b4c] text-[7px] leading-[10px] text-[#eee]">
      <svg className="absolute inset-0" width="39" height="22" viewBox="0 0 39 22" fill="none" aria-hidden="true">{children}</svg>
      <span className="relative">{label}</span>
    </div>
  );
}

function Taskbar() {
  return (
    <footer className="flex h-[26px] items-center border-t border-[#555] bg-linear-to-b from-[#434445] to-[#2b2c2d] pr-[3px] pl-1 text-[#ddd]">
      <button type="button" className="flex items-center gap-[7px] font-bold">
        <Svg size={20}>
          <path d="M1 2h15c5 0 7 3 7 7v13H9c-5 0-7-3-7-7z" fill="#8cc34b" stroke="#e8f5d8" strokeWidth="1.500" />
          <path d="M6 5v9c0 3 2 4 4 4h6c2 0 3-1 3-3v-4c0-3-4-3-4 0v3M15 11c0-3-4-3-4 0v3" stroke="#fff" strokeWidth="2" />
        </Svg>
        Menu
      </button>
      <button type="button" aria-label="Terminal" className="ml-3">
        <Svg size={18}>
          <rect x="1" y="1" width="22" height="22" rx="2" fill="#2b2530" stroke="#ccc" strokeWidth="2" />
          <path d="M5 7l4 3-4 3M11 13h6" stroke="#eee" strokeWidth="1.800" />
        </Svg>
      </button>
      <button type="button" aria-label="Files" className="ml-1">
        <Svg size={18}>
          <path d="M1 3h9l2 3h11v5H1z" fill="#ddd" />
          <path d="M0 8h24v14H0z" fill="#86b055" />
        </Svg>
      </button>
      <div className="ml-3 flex flex-1 gap-1 self-end">
        <TaskButton label="[Centos 7 [Running] ...">
          <rect x="1" y="1" width="22" height="22" fill="#2fb3d4" stroke="#9fe2f2" />
          <path d="M4 7l4 10 4-10 3 8V8l3 8V6" stroke="#fff" strokeWidth="1.800" />
        </TaskButton>
        <TaskButton label="[InkscapeForum.co...">
          <rect x="0" y="0" width="24" height="24" rx="2" fill="#4a7fc4" />
          <circle cx="12" cy="12" r="9" fill="#c8dcf5" />
          <circle cx="12" cy="12" r="4" fill="#3467b0" stroke="#fff" strokeWidth="1.500" />
          <path d="M3 9l6 3M21 8h-9M11 21l3-6" stroke="#4a7fc4" strokeWidth="1.800" />
        </TaskButton>
        <TaskButton label="*New document 1 - I..." active>
          <rect x="0" y="0" width="24" height="24" rx="2" fill="#e8c987" />
          <path d="M4 12l8-7 6 4M4 12l5 7 6-1 3-9M9 12l5-2M9 19l-1-4 6-1" fill="none" stroke="#443c28" strokeWidth="1.800" />
          <path d="M20 3l-3 11" stroke="#c33" strokeWidth="2" />
        </TaskButton>
      </div>
      <span className="mr-[7px] font-bold">54.7ºC</span>
      <div className="flex gap-0.5">
        <Meter label="CPU"><path d="M3 21h8M12 21h5M20 21h8M29 21h8" stroke="#fff" strokeWidth="1.500" /></Meter>
        <Meter label="MEM">
          <path d="M4 19h33" stroke="#777" strokeWidth="2" />
          <path d="M20 11V2a9.500 9.500 0 1 0 9.500 9.500z" fill="#fff" />
        </Meter>
        <Meter label="NET"><path d="M3 21h34" stroke="#888" strokeWidth="2" /></Meter>
        <Meter label="DISK">
          <path d="M3 2v15l2 4c3 0 3-9 6-9s2 9 4 9" stroke="#999" />
          <path d="M4 21h32" stroke="#ccc" strokeWidth="1.500" />
        </Meter>
      </div>
      <div className="ml-1.5 flex items-center gap-1.5">
        <span>en</span>
        <Svg size={15}>
          <path d="M2 9c6-6 14-6 20 0M6 13c4-4 8-4 12 0M9 17c2-2 4-2 6 0" stroke="#ccc" strokeWidth="2.500" />
          <circle cx="12" cy="20" r="1.500" fill="#ccc" />
        </Svg>
        <Svg size={15}>
          <path d="M1 8h4l6-5v18l-6-5H1z" fill="#ccc" />
          <path d="M14 8c2 2 2 6 0 8M17 5c4 4 4 10 0 14M20 3c5 5 5 13 0 18" stroke="#ccc" strokeWidth="2" />
        </Svg>
        <Svg size={15}>
          <path d="M3 5h3V2h7v3h4v17H3z" fill="#bbb" stroke="#ddd" />
          <path d="M20 8l-3 7h3l-1 6 4-8h-3z" fill="#eee" stroke="#444" />
        </Svg>
        <Svg size={18} className="mr-1">
          <path d="M12 1l10 3c0 9-3 15-10 19C5 19 2 13 2 4z" fill="#eee" />
          <path d="M6 11l5 6 7-11" stroke="#4d9a2a" strokeWidth="3.500" />
        </Svg>
        <Svg size={18}>
          <path d="M6 4h14v17H6zM3 6h3M3 10h3M3 14h3M3 18h3M9 2v2M13 2v2M17 2v2" stroke="#bcb8a8" strokeWidth="2" />
        </Svg>
        <Svg size={18}>
          <rect x="4" y="0" width="16" height="24" rx="8" fill="#777" />
          <path d="M7 8l9 8-4 4V4l4 4-9 8" stroke="#fff" strokeWidth="1.800" />
        </Svg>
        <time className="font-bold">13:36</time>
        <Svg size={15}>
          <path d="M2 5h14v10H2zM19 9h4v10H9v-2" stroke="#ccc" strokeWidth="2.200" />
        </Svg>
      </div>
    </footer>
  );
}

export default function App() {
  return (
    <div className="flex min-h-screen flex-col bg-[#d9d9d9] font-['Noto_Sans',sans-serif] text-[12px] text-[#4a4a4a]">
      <Gradients />
      <TitleBar />
      <nav aria-label="Menu bar" className="flex h-[22px] items-center gap-[14px] pl-[7px] text-[#5f5f5f]">
        {menus.map((name) => (
          <button key={name} type="button">{name}</button>
        ))}
      </nav>
      <SelectorToolbar />
      <main className="flex flex-1">
        <Toolbox />
        <Workspace />
        <DocumentProperties />
        <DockTabs />
        <div className="flex w-[14px] shrink-0 flex-col items-center border-l border-[#d4d4d4] bg-[#fcfcfc] pt-0.5">
          <span className="w-1.5 grow-[15] rounded-full bg-[#b5b5b5]" />
          <span className="grow" />
        </div>
        <div className="flex w-[88px] shrink-0">
          <CommandBar />
          <SnapBar />
        </div>
      </main>
      <Palette />
      <StatusBar />
      <Taskbar />
    </div>
  );
}
